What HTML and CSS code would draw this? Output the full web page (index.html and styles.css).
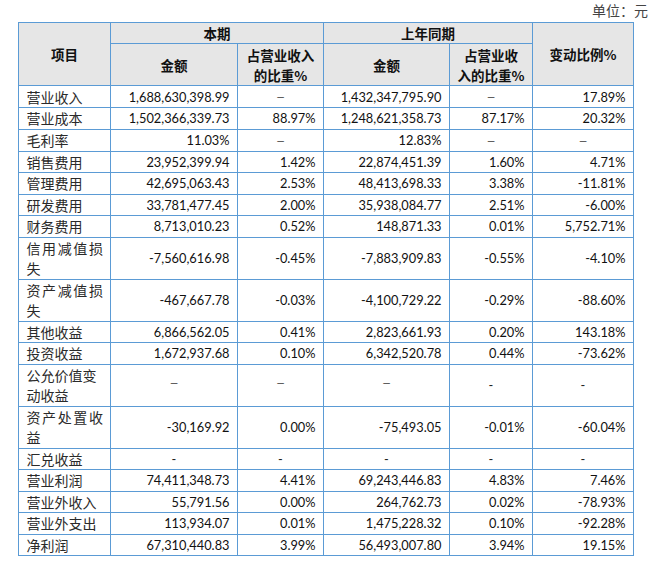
FILE: index.html
```html
<!DOCTYPE html>
<html lang="zh">
<head>
<meta charset="utf-8">
<link rel="stylesheet" href="styles.css">
</head>
<body>
<div class="unit">单位：元</div>
<table class="fin">
  <colgroup>
    <col class="c1"><col class="c2"><col class="c3"><col class="c4"><col class="c5"><col class="c6">
  </colgroup>
  <thead>
    <tr class="h1">
      <th rowspan="2">项目</th>
      <th colspan="2">本期</th>
      <th colspan="2">上年同期</th>
      <th rowspan="2" class="chg">变动比例%</th>
    </tr>
    <tr class="h2">
      <th>金额</th>
      <th>占营业收入<br>的比重%</th>
      <th>金额</th>
      <th>占营业收<br>入的比重%</th>
    </tr>
  </thead>
  <tbody>
    <tr class="s"><td class="lb">营业收入</td><td class="n">1,688,630,398.99</td><td class="d"><span class="en">–</span></td><td class="n">1,432,347,795.90</td><td class="d"><span class="en">–</span></td><td class="n">17.89%</td></tr>
    <tr class="s"><td class="lb">营业成本</td><td class="n">1,502,366,339.73</td><td class="n">88.97%</td><td class="n">1,248,621,358.73</td><td class="n">87.17%</td><td class="n">20.32%</td></tr>
    <tr class="s"><td class="lb">毛利率</td><td class="n">11.03%</td><td class="d"><span class="en">–</span></td><td class="n">12.83%</td><td class="d"><span class="en">–</span></td><td class="d"><span class="en">–</span></td></tr>
    <tr class="s"><td class="lb">销售费用</td><td class="n">23,952,399.94</td><td class="n">1.42%</td><td class="n">22,874,451.39</td><td class="n">1.60%</td><td class="n">4.71%</td></tr>
    <tr class="s"><td class="lb">管理费用</td><td class="n">42,695,063.43</td><td class="n">2.53%</td><td class="n">48,413,698.33</td><td class="n">3.38%</td><td class="n">-11.81%</td></tr>
    <tr class="s"><td class="lb">研发费用</td><td class="n">33,781,477.45</td><td class="n">2.00%</td><td class="n">35,938,084.77</td><td class="n">2.51%</td><td class="n">-6.00%</td></tr>
    <tr class="s"><td class="lb">财务费用</td><td class="n">8,713,010.23</td><td class="n">0.52%</td><td class="n">148,871.33</td><td class="n">0.01%</td><td class="n">5,752.71%</td></tr>
    <tr class="dbl"><td class="lb wide">信用减值损<br>失</td><td class="n">-7,560,616.98</td><td class="n">-0.45%</td><td class="n">-7,883,909.83</td><td class="n">-0.55%</td><td class="n">-4.10%</td></tr>
    <tr class="dbl"><td class="lb wide">资产减值损<br>失</td><td class="n">-467,667.78</td><td class="n">-0.03%</td><td class="n">-4,100,729.22</td><td class="n">-0.29%</td><td class="n">-88.60%</td></tr>
    <tr class="s"><td class="lb">其他收益</td><td class="n">6,866,562.05</td><td class="n">0.41%</td><td class="n">2,823,661.93</td><td class="n">0.20%</td><td class="n">143.18%</td></tr>
    <tr class="s"><td class="lb">投资收益</td><td class="n">1,672,937.68</td><td class="n">0.10%</td><td class="n">6,342,520.78</td><td class="n">0.44%</td><td class="n">-73.62%</td></tr>
    <tr class="dbl"><td class="lb">公允价值变<br>动收益</td><td class="d"><span class="en up">–</span></td><td class="d"><span class="en up">–</span></td><td class="d"><span class="en up">–</span></td><td class="d">-</td><td class="d">-</td></tr>
    <tr class="dbl"><td class="lb wide">资产处置收<br>益</td><td class="n">-30,169.92</td><td class="n">0.00%</td><td class="n">-75,493.05</td><td class="n">-0.01%</td><td class="n">-60.04%</td></tr>
    <tr class="s"><td class="lb">汇兑收益</td><td class="d">-</td><td class="d">-</td><td class="d">-</td><td class="d">-</td><td class="d">-</td></tr>
    <tr class="s"><td class="lb">营业利润</td><td class="n">74,411,348.73</td><td class="n">4.41%</td><td class="n">69,243,446.83</td><td class="n">4.83%</td><td class="n">7.46%</td></tr>
    <tr class="s"><td class="lb">营业外收入</td><td class="n">55,791.56</td><td class="n">0.00%</td><td class="n">264,762.73</td><td class="n">0.02%</td><td class="n">-78.93%</td></tr>
    <tr class="s"><td class="lb">营业外支出</td><td class="n">113,934.07</td><td class="n">0.01%</td><td class="n">1,475,228.32</td><td class="n">0.10%</td><td class="n">-92.28%</td></tr>
    <tr class="s"><td class="lb">净利润</td><td class="n">67,310,440.83</td><td class="n">3.99%</td><td class="n">56,493,007.80</td><td class="n">3.94%</td><td class="n">19.15%</td></tr>
  </tbody>
</table>
</body>
</html>
```

FILE: styles.css
```css
html, body {
  margin: 0;
  padding: 0;
  background: #ffffff;
}

body {
  font-family: "Noto Sans CJK SC", "Noto Sans", sans-serif;
  color: #1a1a1a;
}

.unit {
  height: 22px;
  box-sizing: border-box;
  padding: 1px 5px 0 0;
  text-align: right;
  font-size: 14px;
  line-height: 19px;
  color: #444;
}

.fin {
  margin-left: 18px;
  border-collapse: collapse;
  table-layout: fixed;
  width: 615px;
}

.c1 { width: 92px; }
.c2 { width: 127px; }
.c3 { width: 86px; }
.c4 { width: 126px; }
.c5 { width: 83px; }
.c6 { width: 101px; }

.fin th,
.fin td {
  border: 1px solid #5b9bd5;
  padding: 0 7.5px;
  vertical-align: middle;
  line-height: 20px;
  white-space: nowrap;
}

.fin th {
  background: #e6e6e6;
  font-weight: 700;
  font-size: 13.5px;
  text-align: center;
  color: #111;
}

.h1 { height: 21px; }
.h2 { height: 42px; }
.chg { padding-top: 3px; }

.s { height: 21.5px; }
.dbl { height: 42px; }

.lb {
  font-size: 14px;
  text-align: left;
  color: #2a2a2a;
}

.lb.wide {
  letter-spacing: 1.6px;
}

.n {
  font-family: Lato, "Noto Sans", sans-serif;
  font-size: 12.8px;
  text-align: right;
  color: #111;
}

.d {
  font-family: Lato, "Noto Sans", sans-serif;
  font-size: 12.8px;
  text-align: center;
  color: #222;
}

.en {
  color: #555;
  font-family: "Liberation Sans", sans-serif;
  font-size: 12px;
}

.en.up {
  position: relative;
  top: -3px;
}
```
